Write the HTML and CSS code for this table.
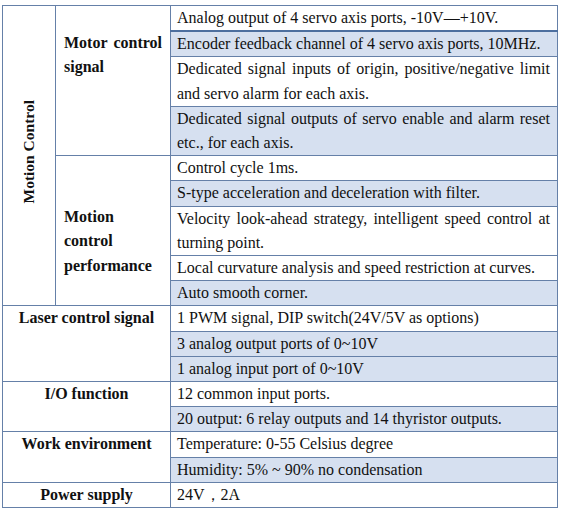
FILE: index.html
```html
<!DOCTYPE html>
<html>
<head>
  <meta charset="utf-8">
  <title>Motion controller specification</title>
  <link rel="stylesheet" href="styles.css">
</head>
<body>

  <table class="spec-table">
    <colgroup>
      <col class="col-group">
      <col class="col-item">
      <col class="col-desc">
    </colgroup>
    <tr class="first-row">
      <td rowspan="9" class="group-cell"><span class="vertical-label">Motion Control</span></td>
      <td rowspan="4" class="item-cell item-motor">Motor control signal</td>
      <td>Analog output of 4 servo axis ports, -10V—+10V.</td>
    </tr>
    <tr class="shaded">
      <td>Encoder feedback channel of 4 servo axis ports, 10MHz.</td>
    </tr>
    <tr>
      <td>Dedicated signal inputs of origin, positive/negative limit and servo alarm for each axis.</td>
    </tr>
    <tr class="shaded">
      <td>Dedicated signal outputs of servo enable and alarm reset etc., for each axis.</td>
    </tr>
    <tr>
      <td rowspan="5" class="item-cell item-motion">Motion<br>control<br>performance</td>
      <td>Control cycle 1ms.</td>
    </tr>
    <tr class="shaded">
      <td>S-type acceleration and deceleration with filter.</td>
    </tr>
    <tr>
      <td>Velocity look-ahead strategy, intelligent speed control at turning point.</td>
    </tr>
    <tr>
      <td>Local curvature analysis and speed restriction at curves.</td>
    </tr>
    <tr class="shaded">
      <td>Auto smooth corner.</td>
    </tr>

    <tr>
      <td colspan="2" rowspan="3" class="head-cell">Laser control signal</td>
      <td>1 PWM signal, DIP switch(24V/5V as options)</td>
    </tr>
    <tr class="shaded">
      <td>3 analog output ports of 0~10V</td>
    </tr>
    <tr class="shaded">
      <td>1 analog input port of 0~10V</td>
    </tr>

    <tr>
      <td colspan="2" rowspan="2" class="head-cell">I/O function</td>
      <td>12 common input ports.</td>
    </tr>
    <tr class="shaded">
      <td>20 output: 6 relay outputs and 14 thyristor outputs.</td>
    </tr>

    <tr>
      <td colspan="2" rowspan="2" class="head-cell">Work environment</td>
      <td>Temperature: 0-55 Celsius degree</td>
    </tr>
    <tr class="shaded">
      <td>Humidity: 5% ~ 90% no condensation</td>
    </tr>

    <tr>
      <td colspan="2" class="head-cell">Power supply</td>
      <td>24V，2A</td>
    </tr>
  </table>

</body>
</html>
```

FILE: styles.css
```css
html {
  font-family: "Liberation Serif", "Times New Roman", serif;
}

* {
  box-sizing: border-box;
}

body {
  margin: 0;
  padding: 5px 0 0 2px;
  background: #fff;
  color: #111;
}

.spec-table {
  border-collapse: collapse;
  table-layout: fixed;
  width: 555px;
  font-family: "Liberation Serif", "Times New Roman", serif;
  font-size: 16px;
  line-height: 24.2px;
}

.col-group { width: 53px; }
.col-item { width: 115px; }
.col-desc { width: 387px; }

.spec-table td {
  border: 1px solid #6580a8;
  padding: 0 7px 0 6px;
  vertical-align: top;
  text-align: justify;
}

/* the first description row has a heavier rule under it */
.first-row td:last-child {
  border-bottom: 2px solid #4d6f9f;
}

.spec-table tr.shaded td:last-child,
.spec-table tr.shaded td:only-child {
  background-color: #d6e0f0;
}

.group-cell {
  vertical-align: middle !important;
  text-align: center !important;
  padding: 0 !important;
  background: #fff;
}

.vertical-label {
  display: inline-block;
  writing-mode: vertical-rl;
  transform: rotate(180deg);
  font-weight: bold;
  font-size: 15.5px;
  margin-top: 0;
}

.item-cell {
  font-weight: bold;
  background: #fff;
  padding-left: 8px !important;
  padding-right: 8px !important;
}

.item-motor {
  padding-top: 25px !important;
}

.item-motion {
  text-align: left !important;
  padding-top: 49px !important;
}

.head-cell {
  font-weight: bold;
  text-align: center !important;
  background: #fff;
  padding-left: 0 !important;
  padding-right: 0 !important;
}
```
